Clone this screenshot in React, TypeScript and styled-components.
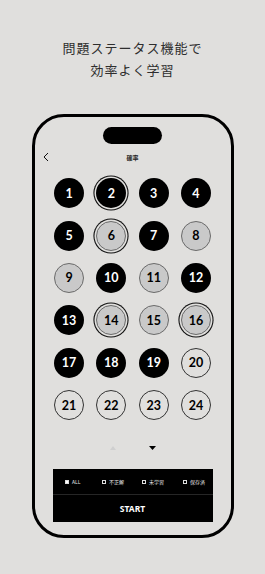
import styled, { createGlobalStyle, css } from "styled-components";

const BG = "#e0dfdd";

const GlobalStyle = createGlobalStyle`
  html, body {
    margin: 0;
    padding: 0;
    background: ${BG};
  }
  body {
    font-family: "Noto Sans", "Noto Sans CJK JP", sans-serif;
  }
`;

const Page = styled.div`
  width: 265px;
  height: 574px;
  background: ${BG};
  overflow: hidden;
  display: flex;
  flex-direction: column;
  align-items: center;
`;

const Headline = styled.h1`
  margin: 37px 0 0;
  font-family: "Noto Sans CJK JP", sans-serif;
  font-weight: 400;
  font-size: 13px;
  line-height: 22px;
  letter-spacing: 1px;
  color: #2e2e2e;
  text-align: center;
`;

const Phone = styled.div`
  box-sizing: border-box;
  width: 202px;
  height: 424px;
  margin-top: 33px;
  border: 3px solid #000;
  border-radius: 32px;
  display: flex;
  flex-direction: column;
  align-items: center;
`;

const Island = styled.div`
  width: 59px;
  height: 17px;
  margin-top: 10px;
  border-radius: 9px;
  background: #000;
`;

const Header = styled.div`
  width: 100%;
  height: 14px;
  margin-top: 6px;
  display: grid;
  grid-template-columns: 1fr auto 1fr;
  align-items: center;
`;

const Back = styled.div`
  padding-left: 8px;
  display: flex;
  align-items: center;
`;

const Title = styled.div`
  font-family: "Noto Sans CJK JP", sans-serif;
  font-size: 6px;
  font-weight: 700;
  color: #222;
`;

const Grid = styled.div`
  margin-top: 8px;
  display: grid;
  grid-template-columns: repeat(4, 42.3px);
  grid-auto-rows: 42.4px;
  place-items: center;
`;

type Kind = "solid" | "gray" | "empty";

const ring = css`
  box-shadow: 0 0 0 1.5px ${BG}, 0 0 0 2.6px #111;
`;

const Ball = styled.div<{ $kind: Kind; $ring?: boolean }>`
  box-sizing: border-box;
  width: 30px;
  height: 30px;
  border-radius: 50%;
  display: flex;
  align-items: center;
  justify-content: center;
  font-family: Lato, "Noto Sans", sans-serif;
  font-weight: 700;
  font-size: 12.5px;
  ${({ $kind }) =>
    $kind === "solid"
      ? css`
          background: #000;
          color: #fff;
        `
      : $kind === "gray"
      ? css`
          background: #c9c9c9;
          color: #000;
          border: 1px solid #6a6a6a;
        `
      : css`
          background: transparent;
          color: #000;
          border: 1px solid #333;
        `}
  ${({ $ring }) => $ring && ring}
`;

const Arrows = styled.div`
  margin-top: 16px;
  height: 12px;
  display: flex;
  align-items: center;
  gap: 33px;
`;

const Panel = styled.div`
  width: 160px;
  margin-top: 15px;
  background: #000;
  display: flex;
  flex-direction: column;
`;

const Filters = styled.div`
  height: 25px;
  padding-left: 12px;
  display: grid;
  grid-template-columns: 37px 40px 41px 1fr;
  align-items: center;
  border-bottom: 1px solid #262626;
`;

const Filter = styled.div`
  display: flex;
  align-items: center;
  gap: 3px;
  font-family: "Noto Sans CJK JP", sans-serif;
  font-size: 5px;
  color: #e6e6e6;
`;

const Check = styled.span<{ $on?: boolean }>`
  box-sizing: border-box;
  width: 4.5px;
  height: 4.5px;
  border: 0.6px solid #ddd;
  background: ${({ $on }) => ($on ? "#fff" : "transparent")};
`;

const Start = styled.div`
  height: 27px;
  display: flex;
  align-items: center;
  justify-content: center;
  font-family: "Noto Sans", sans-serif;
  font-weight: 700;
  font-size: 8.5px;
  color: #fff;
`;

const cells: { n: number; kind: Kind; ring?: boolean }[] = [
  { n: 1, kind: "solid" },
  { n: 2, kind: "solid", ring: true },
  { n: 3, kind: "solid" },
  { n: 4, kind: "solid" },
  { n: 5, kind: "solid" },
  { n: 6, kind: "gray", ring: true },
  { n: 7, kind: "solid" },
  { n: 8, kind: "gray" },
  { n: 9, kind: "gray" },
  { n: 10, kind: "solid" },
  { n: 11, kind: "gray" },
  { n: 12, kind: "solid" },
  { n: 13, kind: "solid" },
  { n: 14, kind: "gray", ring: true },
  { n: 15, kind: "gray" },
  { n: 16, kind: "gray", ring: true },
  { n: 17, kind: "solid" },
  { n: 18, kind: "solid" },
  { n: 19, kind: "solid" },
  { n: 20, kind: "empty" },
  { n: 21, kind: "empty" },
  { n: 22, kind: "empty" },
  { n: 23, kind: "empty" },
  { n: 24, kind: "empty" },
];

export default function App() {
  return (
    <Page>
      <GlobalStyle />
      <Headline>
        問題ステータス機能で
        <br />
        効率よく学習
      </Headline>
      <Phone>
        <Island />
        <Header>
          <Back>
            <svg width="6" height="10" viewBox="0 0 6 10">
              <path d="M5 1 L1 5 L5 9" fill="none" stroke="#111" strokeWidth="1" />
            </svg>
          </Back>
          <Title>確率</Title>
          <div />
        </Header>
        <Grid>
          {cells.map((c) => (
            <Ball key={c.n} $kind={c.kind} $ring={c.ring}>
              {c.n}
            </Ball>
          ))}
        </Grid>
        <Arrows>
          <svg width="6" height="4" viewBox="0 0 6 4">
            <path d="M0 4 L3 0 L6 4 Z" fill="#cfcfcf" />
          </svg>
          <svg width="7" height="4" viewBox="0 0 7 4">
            <path d="M0 0 L7 0 L3.5 4 Z" fill="#000" />
          </svg>
        </Arrows>
        <Panel>
          <Filters>
            <Filter>
              <Check $on />
              ALL
            </Filter>
            <Filter>
              <Check />
              不正解
            </Filter>
            <Filter>
              <Check />
              未学習
            </Filter>
            <Filter>
              <Check />
              保存済
            </Filter>
          </Filters>
          <Start>START</Start>
        </Panel>
      </Phone>
    </Page>
  );
}
